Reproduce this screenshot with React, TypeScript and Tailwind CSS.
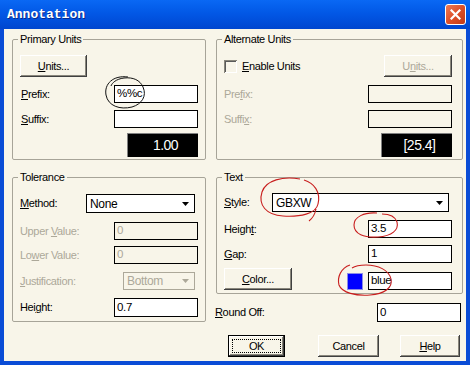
import React from 'react';

const bevel =
  'shadow-[inset_-1px_-1px_0_#404040,inset_1px_1px_0_#ffffff,inset_-2px_-2px_0_#8a877c]';
const gray = 'text-[#aca899]';

function U({ children }: { children: React.ReactNode }) {
  return <span className="underline underline-offset-[1px]">{children}</span>;
}

function Btn({
  w,
  h = 'h-[22px]',
  disabled,
  isDefault,
  children,
}: {
  w: string;
  h?: string;
  disabled?: boolean;
  isDefault?: boolean;
  children: React.ReactNode;
}) {
  if (isDefault) {
    return (
      <div className={`${w} ${h} border border-black bg-[#f8f5e9] p-0`}>
        <div className={`w-full h-full ${bevel} flex items-center justify-center p-[3px]`}>
          <div className="w-full h-full border border-dotted border-black flex items-center justify-center">
            {children}
          </div>
        </div>
      </div>
    );
  }
  return (
    <div
      className={`${w} ${h} bg-[#f8f5e9] ${bevel} flex items-center justify-center ${disabled ? gray : 'text-black'}`}
    >
      {children}
    </div>
  );
}

function Field({
  value,
  w = 'w-[84px]',
  h = 'h-[18px]',
  disabled,
  cream,
}: {
  value?: string;
  w?: string;
  h?: string;
  disabled?: boolean;
  cream?: boolean;
}) {
  return (
    <div
      className={`${w} ${h} border border-black flex items-center pl-[2px] text-[11.5px] ${
        cream || disabled ? 'bg-[#f8f5e9]' : 'bg-white'
      } ${disabled ? 'text-[#aca899] border-[#3a3a3a]' : 'text-black'}`}
    >
      {value}
    </div>
  );
}

function Select({
  value,
  w,
  h = 'h-[19px]',
  disabled,
}: {
  value: string;
  w: string;
  h?: string;
  disabled?: boolean;
}) {
  return (
    <div
      className={`${w} ${h} border flex items-stretch ${
        disabled ? 'border-[#aca899] bg-[#f8f5e9] text-[#aca899]' : 'border-black bg-white text-black'
      }`}
    >
      <div className="flex-1 flex items-center pl-[3px] text-[12px]">{value}</div>
      <div className={`w-[16px] m-[1px] ${disabled ? 'bg-[#f8f5e9]' : 'bg-white'} flex items-center justify-center`}>
        <svg width="7" height="4" viewBox="0 0 7 4">
          <path d="M0 0H7L3.5 4Z" fill={disabled ? '#aca899' : '#000'} />
        </svg>
      </div>
    </div>
  );
}

function Group({
  title,
  className = '',
  children,
}: {
  title: string;
  className?: string;
  children: React.ReactNode;
}) {
  return (
    <fieldset className={`border border-[#a7a498] rounded-[2px] flex flex-col ${className}`}>
      <legend className="ml-[5px] px-[2px] leading-[13px]">{title}</legend>
      {children}
    </fieldset>
  );
}

function Readout({ text, mr }: { text: string; mr: string }) {
  return (
    <div
      className={`self-end ${mr} mt-[5px] w-[71px] h-[24px] bg-black text-white text-[14px] flex items-center justify-center pl-[6px] tracking-[-0.5px] shadow-[inset_1px_1px_0_#808080]`}
    >
      {text}
    </div>
  );
}

export default function App() {
  return (
    <div className="relative w-[470px] h-[365px] bg-[#0a4cd6] flex flex-col font-['Liberation_Sans',Arial,sans-serif] text-[11px] tracking-[-0.35px] text-black overflow-hidden">
      {/* Title bar */}
      <div className="h-[29px] flex items-center bg-gradient-to-b from-[#0a68f4] via-[#0256e4] to-[#0046cf]">
        <span className="pl-[7px] font-['Liberation_Mono',monospace] font-bold text-[13px] tracking-normal text-white [text-shadow:1px_1px_0_#0a2a8a]">
          Annotation
        </span>
        <div className="ml-auto mr-[4px] w-[21px] h-[21px] rounded-[3px] border border-white bg-gradient-to-br from-[#ec7a55] via-[#de4f28] to-[#c23a17] flex items-center justify-center">
          <svg width="11" height="11" viewBox="0 0 11 11">
            <path d="M1.5 1.5L9.5 9.5M9.5 1.5L1.5 9.5" stroke="#fff" strokeWidth="2.2" strokeLinecap="square" />
          </svg>
        </div>
      </div>

      {/* Body */}
      <div className="flex-1 mx-[4px] mb-[4px] bg-[#f8f5e9] flex flex-col pl-[8px] pr-[3px] pt-[4px]">
        <div className="grid grid-cols-[194px_247px] gap-x-[10px] gap-y-[11px]">
          {/* Primary Units */}
          <Group title="Primary Units" className="pb-[2px]">
            <div className="mt-[9px] pl-[7px]">
              <Btn w="w-[67px]">
                <span><U>U</U>nits...</span>
              </Btn>
            </div>
            <div className="mt-[8px] h-[18px] pl-[8px] pr-[7px] flex items-center justify-between">
              <span><U>P</U>refix:</span>
              <Field value="%%c" />
            </div>
            <div className="mt-[7px] h-[18px] pl-[8px] pr-[7px] flex items-center justify-between">
              <span><U>S</U>uffix:</span>
              <Field />
            </div>
            <Readout text="1.00" mr="mr-[7px]" />
          </Group>

          {/* Alternate Units */}
          <Group title="Alternate Units" className="pb-[2px]">
            <div className="mt-[9px] h-[22px] pl-[7px] pr-[10px] flex items-center">
              <div className="w-[13px] h-[13px] bg-[#f8f5e9] shadow-[inset_1px_1px_0_#8a877c,inset_-1px_-1px_0_#ffffff,inset_2px_2px_0_#5a5a5a]" />
              <span className="ml-[5px]"><U>E</U>nable Units</span>
              <div className="ml-auto">
                <Btn w="w-[68px]" disabled>
                  <span>U<U>n</U>its...</span>
                </Btn>
              </div>
            </div>
            <div className={`mt-[8px] h-[18px] pl-[7px] pr-[10px] flex items-center justify-between ${gray}`}>
              <span>Pre<U>f</U>ix:</span>
              <Field cream />
            </div>
            <div className={`mt-[7px] h-[18px] pl-[7px] pr-[10px] flex items-center justify-between ${gray}`}>
              <span>Suffi<U>x</U>:</span>
              <Field cream />
            </div>
            <Readout text="[25.4]" mr="mr-[10px]" />
          </Group>

          {/* Tolerance */}
          <Group title="Tolerance" className="pb-[1px]">
            <div className="mt-[10px] h-[19px] pl-[7px] pr-[10px] flex items-center justify-between">
              <span><U>M</U>ethod:</span>
              <Select value="None" w="w-[109px]" />
            </div>
            <div className={`mt-[9px] h-[18px] pl-[7px] pr-[7px] flex items-center justify-between ${gray}`}>
              <span>Upper <U>V</U>alue:</span>
              <Field value="0" disabled />
            </div>
            <div className={`mt-[6px] h-[18px] pl-[7px] pr-[7px] flex items-center justify-between ${gray}`}>
              <span>Lo<U>w</U>er Value:</span>
              <Field value="0" disabled />
            </div>
            <div className={`mt-[8px] h-[18px] pl-[7px] pr-[10px] flex items-center justify-between ${gray}`}>
              <span><U>J</U>ustification:</span>
              <Select value="Bottom" w="w-[72px]" h="h-[18px]" disabled />
            </div>
            <div className="mt-[8px] h-[19px] pl-[7px] pr-[7px] flex items-center justify-between">
              <span>Hei<U>g</U>ht:</span>
              <Field value="0.7" h="h-[19px]" />
            </div>
          </Group>

          {/* Text + Round Off */}
          <div className="flex flex-col">
            <Group title="Text" className="pb-[3px]">
              <div className="mt-[9px] h-[19px] pl-[7px] pr-[13px] flex items-center justify-between">
                <span><U>S</U>tyle:</span>
                <Select value="GBXW" w="w-[177px]" />
              </div>
              <div className="mt-[8px] h-[18px] pl-[7px] pr-[10px] flex items-center justify-between">
                <span>Heigh<U>t</U>:</span>
                <Field value="3.5" />
              </div>
              <div className="mt-[7px] h-[18px] pl-[7px] pr-[10px] flex items-center justify-between">
                <span><U>G</U>ap:</span>
                <Field value="1" />
              </div>
              <div className="mt-[5px] h-[22px] pl-[7px] pr-[10px] flex items-end justify-between">
                <Btn w="w-[68px]">
                  <span><U>C</U>olor...</span>
                </Btn>
                <div className="flex items-end gap-[5px]">
                  <div className="w-[16px] h-[17px] bg-[#0000ff] border border-[#8c8ce6]" />
                  <Field value="blue" />
                </div>
              </div>
            </Group>
            <div className="mt-[9px] h-[19px] ml-[-1px] pr-[2px] flex items-center justify-between">
              <span><U>R</U>ound Off:</span>
              <Field value="0" h="h-[19px]" />
            </div>
          </div>
        </div>

        {/* Dialog buttons */}
        <div className="mt-[13px] mr-[3px] flex justify-end">
          <Btn w="w-[57px]" isDefault>
            <span>OK</span>
          </Btn>
          <div className="ml-[33px]">
            <Btn w="w-[61px]">
              <span>Cancel</span>
            </Btn>
          </div>
          <div className="ml-[21px]">
            <Btn w="w-[60px]">
              <span><U>H</U>elp</span>
            </Btn>
          </div>
        </div>
      </div>

      {/* Hand-drawn annotation marks */}
      <svg className="absolute inset-0 pointer-events-none" width="470" height="365" viewBox="0 0 470 365" fill="none">
        <path
          d="M128 77 C113 75 104 84 106 95 C108 106 120 110 132 107 C142 104 147 96 143 87 C140 80 133 77 124 78 C116 79 112 83 111 86"
          stroke="#111"
          strokeWidth="1"
        />
        <path
          d="M300 179 C283 176 266 180 262 192 C258 205 266 215 283 216 C300 217 316 214 318 204 C321 192 314 183 304 180 M316 209 C315 214 313 218 309 221"
          stroke="#c81e1e"
          strokeWidth="1.1"
        />
        <path
          d="M377 213 C364 212 354 217 354 225 C354 234 364 238 378 237 C392 236 399 230 397 222 C395 216 389 214 382 214"
          stroke="#c81e1e"
          strokeWidth="1.1"
        />
        <path
          d="M350 265 C341 268 337 277 339 285 C342 293 356 296 370 295 C384 294 393 288 391 279 C389 270 378 265 366 265 C360 265 355 266 352 268"
          stroke="#c81e1e"
          strokeWidth="1.1"
        />
      </svg>
    </div>
  );
}
